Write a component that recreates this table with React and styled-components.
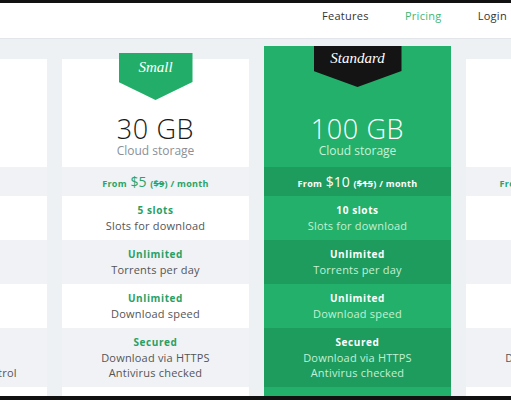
import styled, { createGlobalStyle } from "styled-components";

const GlobalStyle = createGlobalStyle`
  html, body {
    margin: 0;
    padding: 0;
  }
  body {
    width: 511px;
    height: 400px;
    overflow: hidden;
    background: #eef1f4;
    font-family: "Open Sans", "DejaVu Sans", sans-serif;
  }
`;

const Page = styled.div`
  height: 400px;
  box-sizing: border-box;
  border-top: 3px solid #111;
  border-bottom: 4px solid #111;
  display: flex;
  flex-direction: column;
  overflow: hidden;
`;

const TopBar = styled.header`
  height: 36px;
  box-sizing: border-box;
  flex: none;
  background: #fff;
  border-bottom: 1px solid #e2e5e9;
  display: flex;
  justify-content: flex-end;
  align-items: flex-start;
  gap: 36px;
  padding: 5px 4px 0 0;
`;

const NavLink = styled.a`
  font-size: 11px;
  line-height: 15px;
  letter-spacing: 0.3px;
  color: ${(p) => (p.$active ? "#3cb77a" : "#333")};
  text-decoration: none;
`;

const Plans = styled.div`
  display: flex;
  align-items: flex-start;
  gap: 15px;
  margin: 20px 0 0 -140px;
`;

const Card = styled.div`
  position: relative;
  flex: none;
  width: 187px;
  padding-bottom: 20px;
  margin-top: ${(p) => (p.$featured ? "-13px" : "0")};
  background: ${(p) => (p.$featured ? "#23b06a" : "#fff")};
`;

const Head = styled.div`
  height: ${(p) => (p.$featured ? "121px" : "108px")};
  box-sizing: border-box;
  padding-bottom: 8px;
  display: flex;
  flex-direction: column;
  justify-content: flex-end;
  align-items: center;
`;

const Badge = styled.div`
  position: absolute;
  left: 50%;
  transform: translateX(-50%);
  top: ${(p) => (p.$featured ? "0" : "-6px")};
  width: ${(p) => (p.$featured ? "88px" : "74px")};
  height: ${(p) => (p.$featured ? "41px" : "47px")};
  background: ${(p) => (p.$featured ? "#141414" : "#22ae69")};
  clip-path: ${(p) =>
    p.$featured
      ? "polygon(0 0, 100% 0, 100% 25px, 50% 100%, 0 25px)"
      : "polygon(0 0, 100% 0, 100% 29px, 50% 100%, 0 29px)"};
  color: #fff;
  text-align: center;
  font-family: "Liberation Serif", "DejaVu Serif", serif;
  font-style: italic;
  font-size: 15px;
  line-height: ${(p) => (p.$featured ? "24px" : "29px")};
`;

const Size = styled.div`
  font-size: 27px;
  font-weight: 300;
  line-height: 28px;
  letter-spacing: 0.6px;
  color: ${(p) => (p.$featured ? "#fff" : "#1a1a1a")};
`;

const SizeNote = styled.div`
  font-size: 12px;
  line-height: 16px;
  color: ${(p) => (p.$featured ? "#c6f2d8" : "#8b9096")};
`;

const Price = styled.div`
  height: 29px;
  line-height: 29px;
  text-align: center;
  background: ${(p) => (p.$featured ? "#1e9c5e" : "#f0f2f5")};
  color: ${(p) => (p.$featured ? "#fff" : "#28a467")};
  font-size: 9px;
  font-weight: 700;
  letter-spacing: 0.3px;
  white-space: nowrap;
  big {
    font-size: 14px;
    font-weight: 400;
    letter-spacing: 0;
    margin: 0 1px;
  }
  s {
    text-decoration: line-through;
  }
`;

const Feature = styled.div`
  padding: 7px 0;
  text-align: center;
  white-space: nowrap;
  background: ${(p) => (p.$featured ? "#23b06a" : "#fff")};
  &:nth-child(even) {
    background: ${(p) => (p.$featured ? "#1e9c5e" : "#f0f2f5")};
  }
`;

const FeatureTitle = styled.div`
  font-size: 10px;
  line-height: 15px;
  font-weight: 700;
  letter-spacing: 0.6px;
  color: ${(p) => (p.$featured ? "#fff" : "#2a9f64")};
`;

const FeatureText = styled.div`
  font-size: 11px;
  line-height: 15px;
  letter-spacing: 0.2px;
  color: ${(p) => (p.$featured ? "#c3f0d5" : "#555")};
`;

const plans = [
  {
    name: "Free",
    size: "5 GB",
    free: true,
    features: [
      ["1", "Slot"],
      ["10", "Per day"],
      ["1 MB/s", "Speed"],
      ["Basic", "HTTP", "No live antivirus control"],
    ],
  },
  {
    name: "Small",
    size: "30 GB",
    price: "5",
    old: "9",
    features: [
      ["5 slots", "Slots for download"],
      ["Unlimited", "Torrents per day"],
      ["Unlimited", "Download speed"],
      ["Secured", "Download via HTTPS", "Antivirus checked"],
    ],
  },
  {
    name: "Standard",
    size: "100 GB",
    price: "10",
    old: "15",
    featured: true,
    features: [
      ["10 slots", "Slots for download"],
      ["Unlimited", "Torrents per day"],
      ["Unlimited", "Download speed"],
      ["Secured", "Download via HTTPS", "Antivirus checked"],
    ],
  },
  {
    name: "Large",
    size: "500 GB",
    price: "20",
    old: "30",
    features: [
      ["20 slots", "Slots"],
      ["Unlimited", "Torrents"],
      ["Unlimited", "Speed"],
      ["Secured", "Download via HTTPS", "Antivirus checked"],
    ],
  },
];

const PlanCard = ({ plan }) => {
  const f = plan.featured;
  return (
    <Card $featured={f}>
      <Badge $featured={f}>{plan.name}</Badge>
      <Head $featured={f}>
        <Size $featured={f}>{plan.size}</Size>
        <SizeNote $featured={f}>Cloud storage</SizeNote>
      </Head>
      <Price $featured={f}>
        {plan.free ? (
          "Free"
        ) : (
          <>
            From <big>${plan.price}</big> (<s>${plan.old}</s>) / month
          </>
        )}
      </Price>
      <div>
        {plan.features.map(([title, ...lines], i) => (
          <Feature key={i} $featured={f}>
            <FeatureTitle $featured={f}>{title}</FeatureTitle>
            {lines.map((l) => (
              <FeatureText key={l} $featured={f}>
                {l}
              </FeatureText>
            ))}
          </Feature>
        ))}
      </div>
    </Card>
  );
};

export default function App() {
  return (
    <>
      <GlobalStyle />
      <Page>
        <TopBar>
          <NavLink href="#">Features</NavLink>
          <NavLink href="#" $active>
            Pricing
          </NavLink>
          <NavLink href="#">Login</NavLink>
        </TopBar>
        <Plans>
          {plans.map((p) => (
            <PlanCard key={p.name} plan={p} />
          ))}
        </Plans>
      </Page>
    </>
  );
}
